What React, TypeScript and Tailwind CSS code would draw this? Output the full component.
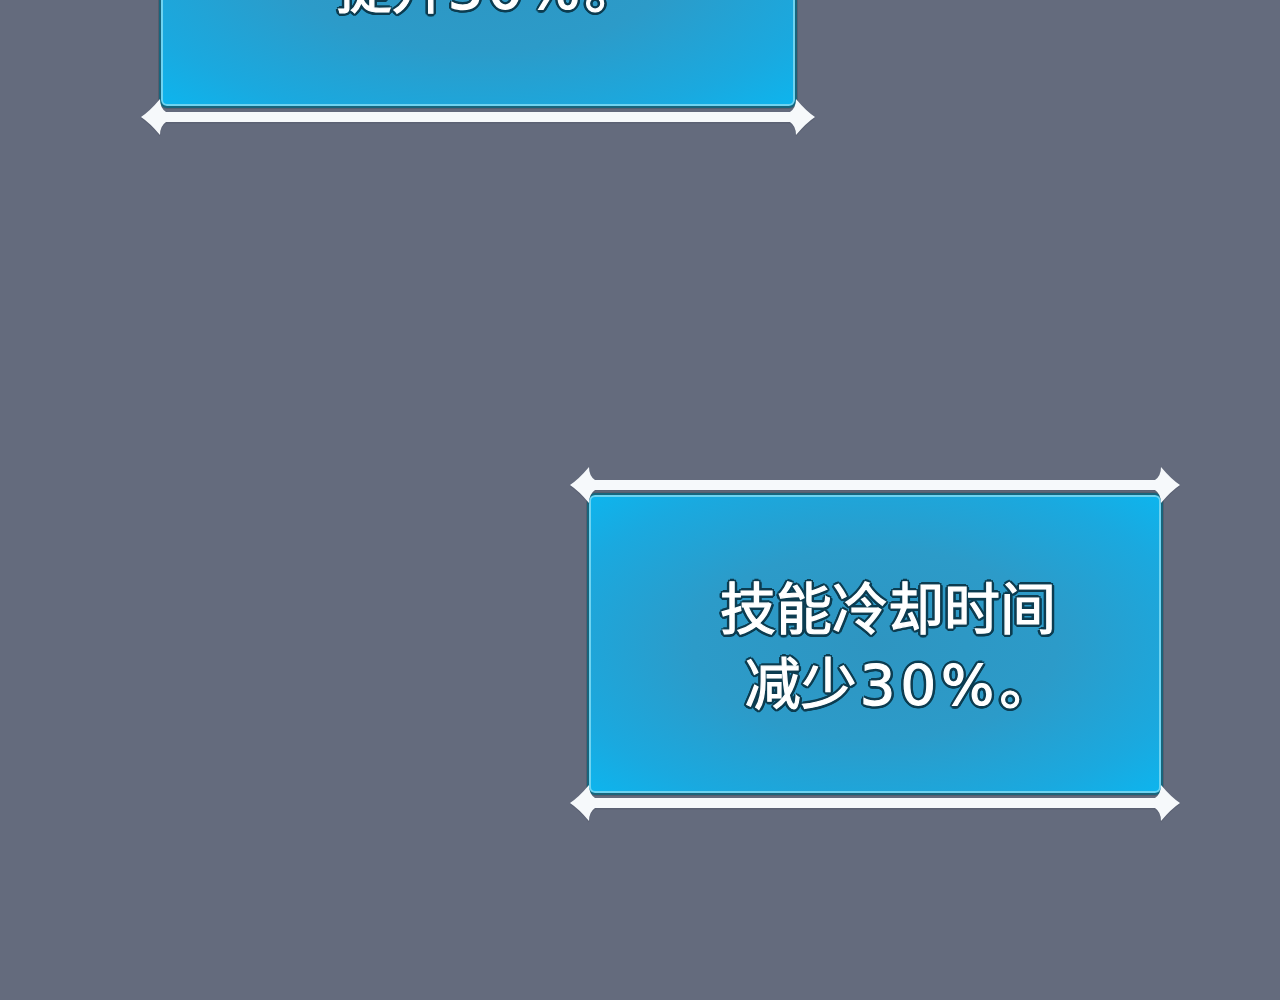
const textFx =
  "font-['DejaVu_Sans','Noto_Sans_CJK_SC',sans-serif] text-white text-[56px] leading-[75px] [-webkit-text-stroke:1.2px_#ffffff] [text-shadow:3px_0_#0c3c50,-3px_0_#0c3c50,0_3px_#0c3c50,0_-3px_#0c3c50,2px_2px_#0c3c50,-2px_2px_#0c3c50,2px_-2px_#0c3c50,-2px_-2px_#0c3c50,3px_1px_#0c3c50,-3px_1px_#0c3c50,1px_3px_#0c3c50,-1px_3px_#0c3c50] whitespace-nowrap";

const cardFx =
  "rounded-[8px] border-2 border-[#17657c] shadow-[inset_0_0_0_2px_#6fd3f0,0_0_0_1px_rgba(70,80,95,0.5)] bg-[radial-gradient(ellipse_at_center,#2e95c1_0%,#2c9bc9_45%,#1aa9df_80%,#0db5ee_100%)] flex flex-col items-center justify-center";

// White rail with curled arrow ends, drawn above and below each card
const Rail = ({ width, className = "" }: { width: number; className?: string }) => {
  const w = width;
  const d = [
    "M0 20",
    "Q9 14 19 2",
    "Q19 11 25 15",
    `L${w - 25} 15`,
    `Q${w - 19} 11 ${w - 19} 2`,
    `Q${w - 9} 14 ${w} 20`,
    `Q${w - 9} 26 ${w - 19} 38`,
    `Q${w - 19} 29 ${w - 25} 25`,
    "L25 25",
    "Q19 29 19 38",
    "Q9 26 0 20 Z",
  ].join(" ");
  return (
    <svg
      width={w}
      height={40}
      viewBox={`0 0 ${w} 40`}
      className={`relative z-10 block shrink-0 ${className}`}
    >
      <path d={d} fill="#4a5060" opacity="0.35" transform="translate(0 1.5)" />
      <path d={d} fill="#f6f9fb" />
    </svg>
  );
};

export default function App() {
  return (
    <div className="w-[1280px] h-[1000px] overflow-hidden bg-[#646b7d]">
      {/* upper card, mostly scrolled off the top */}
      <div className="ml-[141px] w-[674px] flex flex-col items-center -mt-[201px]">
        <div className={`w-[638px] h-[309px] pb-[6px] pl-[20px] ${cardFx}`}>
          <p className={textFx}>技能伤害增加</p>
          <p className={textFx}>
            提升<span className="tracking-[4px]">30%</span>。
          </p>
        </div>
        <Rail width={674} className="-mt-[11px]" />
      </div>

      {/* lower card */}
      <div className="ml-[570px] mt-[328px] w-[610px] flex flex-col items-center">
        <Rail width={610} />
        <div className={`-mt-[12px] w-[576px] h-[302px] pl-[26px] pt-[6px] ${cardFx}`}>
          <p className={textFx}>技能冷却时间</p>
          <p className={`${textFx} pl-[24px]`}>
            减少<span className="ml-[3px] tracking-[5px]">30%</span>。
          </p>
        </div>
        <Rail width={610} className="-mt-[12px]" />
      </div>
    </div>
  );
}
